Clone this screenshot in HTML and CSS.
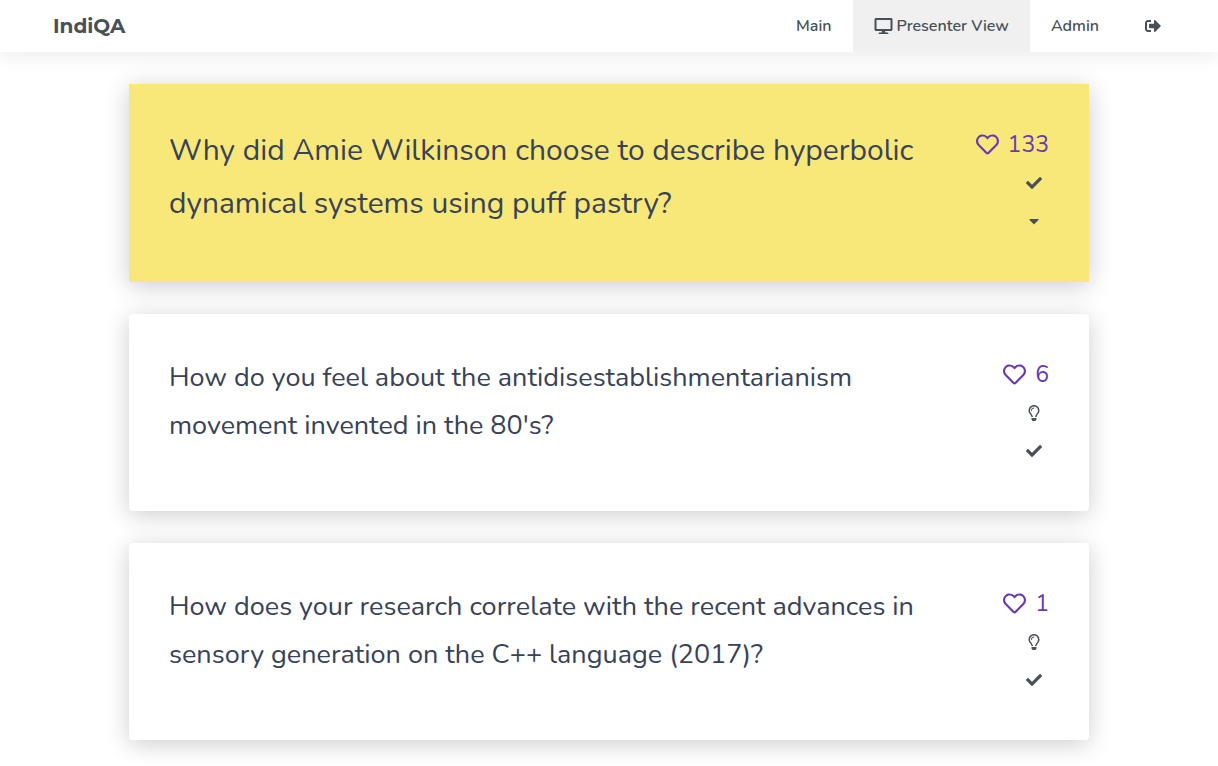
FILE: index.html
```html
<!DOCTYPE html>
<html lang="en">
<head>
<meta charset="utf-8">
<meta name="viewport" content="width=device-width, initial-scale=1">
<title>IndiQA</title>
<link rel="stylesheet" href="styles.css">
</head>
<body>
<svg class="sprite" aria-hidden="true">
  <symbol id="heart" viewBox="0 0 512 512"><path d="M458.4 64.3C400.6 15.700 311.300 23 256 79.300 200.700 23 111.400 15.600 53.600 64.300-21.600 127.600-10.600 230.800 43 285.500l175.400 178.700c10 10.200 23.400 15.900 37.600 15.900 14.300 0 27.600-5.600 37.600-15.800L469 285.600c53.500-54.700 64.700-157.900-10.600-221.300zm-23.600 187.500L259.400 430.500c-2.400 2.400-4.400 2.400-6.800 0L77.200 251.800c-36.500-37.200-43.900-107.600 7.300-150.700 38.900-32.700 98.900-27.800 136.500 10.500l35 35.700 35-35.700c37.800-38.500 97.800-43.200 136.500-10.600 51.100 43.100 43.500 113.900 7.300 150.800z"/></symbol>
  <symbol id="check" viewBox="0 0 512 512"><path d="M173.898 439.404l-166.400-166.400c-9.997-9.997-9.997-26.206 0-36.204l36.203-36.204c9.997-9.998 26.207-9.998 36.204 0L192 312.690 432.095 72.596c9.997-9.997 26.207-9.997 36.204 0l36.203 36.204c9.997 9.997 9.997 26.206 0 36.204l-294.400 294.401c-9.998 9.997-26.207 9.997-36.204-.001z"/></symbol>
  <symbol id="caret" viewBox="0 0 320 512"><path d="M31.300 192h257.300c17.800 0 26.700 21.500 14.100 34.100L174.100 354.800c-7.800 7.800-20.500 7.800-28.300 0L17.200 226.100C4.600 213.500 13.500 192 31.300 192z"/></symbol>
  <symbol id="bulb" viewBox="0 0 352 512"><path d="M176 80c-52.940 0-96 43.060-96 96 0 8.840 7.160 16 16 16s16-7.160 16-16c0-35.300 28.720-64 64-64 8.840 0 16-7.160 16-16s-7.160-16-16-16zM96.060 459.170c0 3.150.93 6.220 2.680 8.840l24.510 36.840c2.970 4.460 7.970 7.140 13.320 7.140h78.850c5.360 0 10.360-2.680 13.320-7.140l24.510-36.840c1.740-2.620 2.670-5.700 2.680-8.840l.05-43.180H96.020l.04 43.180zM176 0C73.720 0 0 82.970 0 176c0 44.370 16.450 84.850 43.560 115.780 16.640 18.990 42.740 58.800 52.420 92.160v.06h48v-.12c-.01-4.770-.72-9.510-2.150-14.070-5.590-17.810-22.820-64.770-62.170-109.670-20.540-23.430-31.520-53.150-31.610-84.140-.2-73.640 59.670-128 127.950-128 70.580 0 128 57.420 128 128 0 30.970-11.240 60.850-31.650 84.140-39.110 44.610-56.420 91.470-62.100 109.460a47.507 47.507 0 0 0-2.220 14.300v.1h48v-.05c9.680-33.370 35.780-73.180 52.420-92.160C335.550 260.850 352 220.370 352 176 352 78.800 273.200 0 176 0z"/></symbol>
  <symbol id="desktop" viewBox="0 0 576 512"><path d="M528 0H48C21.500 0 0 21.500 0 48v320c0 26.500 21.500 48 48 48h192l-16 48h-72c-13.300 0-24 10.700-24 24s10.700 24 24 24h272c13.300 0 24-10.700 24-24s-10.700-24-24-24h-72l-16-48h192c26.500 0 48-21.500 48-48V48c0-26.500-21.500-48-48-48zm-16 352H64V64h448v288z"/></symbol>
  <symbol id="signout" viewBox="0 0 512 512"><path d="M497 273L329 441c-15 15-41 4.500-41-17v-96H152c-13.300 0-24-10.700-24-24v-96c0-13.300 10.700-24 24-24h136V88c0-21.400 25.900-32 41-17l168 168c9.300 9.400 9.300 24.600 0 34zM192 436v-40c0-6.600-5.400-12-12-12H96c-17.700 0-32-14.300-32-32V160c0-17.700 14.300-32 32-32h84c6.600 0 12-5.400 12-12V76c0-6.600-5.400-12-12-12H96c-53 0-96 43-96 96v192c0 53 43 96 96 96h84c6.600 0 12-5.400 12-12z"/></symbol>
</svg>
<header class="navbar">
  <a class="brand" href="#">IndiQA</a>
  <nav class="nav">
    <a class="nav-link" href="#">Main</a>
    <a class="nav-link active" href="#" aria-current="page"><svg class="icon-desktop" aria-hidden="true"><use href="#desktop"/></svg>Presenter View</a>
    <a class="nav-link" href="#">Admin</a>
    <a class="nav-link logout" href="#" aria-label="Log out"><svg class="icon" aria-hidden="true"><use href="#signout"/></svg></a>
  </nav>
</header>
<main class="questions">
  <article class="card highlighted">
    <p class="question">Why did Amie Wilkinson choose to describe hyperbolic dynamical systems using puff pastry?</p>
    <div class="actions">
      <button class="like"><svg class="icon-heart" aria-hidden="true"><use href="#heart"/></svg>133</button>
      <button class="action" aria-label="Mark answered"><svg class="icon"><use href="#check"/></svg></button>
      <button class="action" aria-label="Lower"><svg class="icon"><use href="#caret"/></svg></button>
    </div>
  </article>
  <article class="card">
    <p class="question">How do you feel about the antidisestablishmentarianism movement invented in the 80's?</p>
    <div class="actions">
      <button class="like"><svg class="icon-heart" aria-hidden="true"><use href="#heart"/></svg>6</button>
      <button class="action" aria-label="Highlight"><svg class="icon"><use href="#bulb"/></svg></button>
      <button class="action" aria-label="Mark answered"><svg class="icon"><use href="#check"/></svg></button>
    </div>
  </article>
  <article class="card">
    <p class="question">How does your research correlate with the recent advances in sensory generation on the C++ language (2017)?</p>
    <div class="actions">
      <button class="like"><svg class="icon-heart" aria-hidden="true"><use href="#heart"/></svg>1</button>
      <button class="action" aria-label="Highlight"><svg class="icon"><use href="#bulb"/></svg></button>
      <button class="action" aria-label="Mark answered"><svg class="icon"><use href="#check"/></svg></button>
    </div>
  </article>
</main>
</body>
</html>
```
FILE: styles.css
```css
* { box-sizing: border-box; }
body {
  margin: 0;
  background: #fff;
  color: #485058;
  font-family: Nunito, "Open Sans", sans-serif;
  font-size: 16px;
}
.sprite { display: none; }
.navbar {
  display: flex;
  justify-content: space-between;
  height: 52px;
  padding: 0 32px 0 53px;
  box-shadow: 0 4px 20px rgba(0, 0, 0, 0.08);
}
.brand {
  display: flex;
  align-items: center;
  color: inherit;
  font-family: Montserrat, Inter, sans-serif;
  font-size: 20px;
  font-weight: 700;
  text-decoration: none;
}
.nav { display: flex; }
.nav-link {
  display: flex;
  align-items: center;
  gap: 4px;
  padding: 0 21px;
  color: inherit;
  font-weight: 600;
  text-decoration: none;
}
.nav-link.active { background: #f0f0f0; }
.nav-link.logout { padding: 0 25px; }
.icon-desktop { width: 19px; height: 16px; fill: currentColor; }
.icon { width: 16px; height: 16px; fill: currentColor; }
.questions {
  display: flex;
  flex-direction: column;
  gap: 32px;
  max-width: 960px;
  margin: 0 auto;
  padding: 32px 0 24px;
}
.card {
  display: flex;
  justify-content: space-between;
  gap: 24px;
  padding: 40px 40px 41px;
  border-radius: 4px;
  background: #fff;
  box-shadow: 0 4px 24px rgba(0, 0, 0, 0.2);
}
.question {
  flex: 1;
  margin: 0;
  color: #384258;
  font-size: 27px;
  line-height: 48px;
}
.highlighted { padding-bottom: 42px; border-radius: 0; background: #f8e879; }
.highlighted .question { font-size: 30px; line-height: 53px; }
.actions {
  display: flex;
  flex-direction: column;
  align-items: flex-end;
}
button {
  display: flex;
  align-items: center;
  padding: 0;
  border: 0;
  background: none;
  color: inherit;
  font: inherit;
  cursor: pointer;
}
.like {
  gap: 9px;
  height: 40px;
  color: #6639b7;
  font-size: 23px;
}
.icon-heart { width: 23px; height: 23px; fill: currentColor; }
.action { height: 38px; padding: 0 7px; }
```
